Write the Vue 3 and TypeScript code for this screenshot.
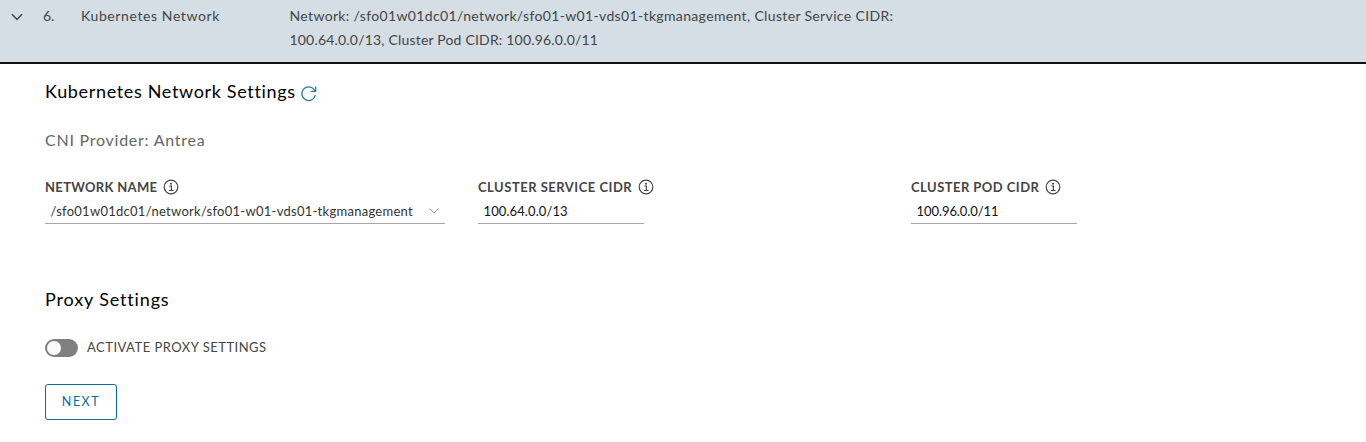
<script setup lang="ts">
import { ref } from 'vue'

const networkName = '/sfo01w01dc01/network/sfo01-w01-vds01-tkgmanagement'
const serviceCidr = ref('100.64.0.0/13')
const podCidr = ref('100.96.0.0/11')
const proxyActive = ref(false)
</script>

<template>
  <main class="page">
    <header class="step-header">
      <svg class="caret" width="12" height="8" viewBox="0 0 12 8"><path d="M1 1.2 6 6.4 11 1.2" /></svg>
      <span class="step-number">6.</span>
      <span class="step-title">Kubernetes Network</span>
      <div class="summary">
        <div><span class="sum-one">Network: {{ networkName }}, Cluster Service CIDR:</span></div>
        <div><span class="sum-two">{{ serviceCidr }}, Cluster Pod CIDR: {{ podCidr }}</span></div>
      </div>
    </header>

    <section class="content">
      <h2 class="heading">
        <span class="heading-text">Kubernetes Network Settings</span>
        <svg class="refresh" width="16" height="17" viewBox="0 0 16 17">
          <path d="M14.3 10.1A6.8 6.8 0 1 1 13.4 5.1L14 6" />
          <path d="M14.6 1.4V6.3H9.8" />
        </svg>
      </h2>
      <p class="provider"><span>CNI Provider: Antrea</span></p>

      <div class="fields">
        <div class="field">
          <label class="label"><span class="label-name">NETWORK NAME</span>
            <svg class="info" width="16" height="16" viewBox="0 0 16 16"><circle cx="8" cy="8" r="6.8" /><path d="M6.3 7H8.4V11.5M5.9 11.5H10.5" /><circle class="dot" cx="8" cy="4.7" r="1" /></svg>
          </label>
          <div class="select">
            <span class="network-value">{{ networkName }}</span>
            <svg class="select-caret" width="10" height="6" viewBox="0 0 10 6"><path d="M.7 .8 5 5 9.3 .8" /></svg>
          </div>
        </div>
        <div class="field">
          <label class="label"><span class="label-service">CLUSTER SERVICE CIDR</span>
            <svg class="info" width="16" height="16" viewBox="0 0 16 16"><circle cx="8" cy="8" r="6.8" /><path d="M6.3 7H8.4V11.5M5.9 11.5H10.5" /><circle class="dot" cx="8" cy="4.7" r="1" /></svg>
          </label>
          <input v-model="serviceCidr" class="input service" type="text">
        </div>
        <div class="field">
          <label class="label"><span class="label-pod">CLUSTER POD CIDR</span>
            <svg class="info" width="16" height="16" viewBox="0 0 16 16"><circle cx="8" cy="8" r="6.8" /><path d="M6.3 7H8.4V11.5M5.9 11.5H10.5" /><circle class="dot" cx="8" cy="4.7" r="1" /></svg>
          </label>
          <input v-model="podCidr" class="input pod" type="text">
        </div>
      </div>

      <h2 class="heading proxy-heading"><span>Proxy Settings</span></h2>
      <div class="toggle-row" role="switch" :aria-checked="proxyActive" @click="proxyActive = !proxyActive">
        <span class="toggle" :class="{ on: proxyActive }"><i class="knob"></i></span>
        <span class="toggle-label">ACTIVATE PROXY SETTINGS</span>
      </div>
      <button class="next" type="button"><span>NEXT</span></button>
    </section>
  </main>
</template>

<style>
body { background: #fff; }
</style>

<style scoped>
.page {
  height: 442px;
  overflow: hidden;
  background: #fff;
  color: #454545;
  font-family: Lato, "Open Sans", sans-serif;
}
svg { display: block; flex: none; fill: none; }
span { white-space: nowrap; }
.step-header {
  box-sizing: border-box;
  height: 64px;
  display: flex;
  align-items: flex-start;
  padding: 4px 0 0 11px;
  background: #d4dee4;
  border-bottom: 2px solid #111;
  font-size: 14px;
  line-height: 24px;
}
.caret { margin-top: 9px; stroke: #454545; stroke-width: 1.5; }
.step-number { width: 38px; margin-left: 20px; }
.step-title { width: 208px; letter-spacing: .6px; }
.summary { padding-left: .5px; }
.sum-one { letter-spacing: .35px; }
.sum-two { letter-spacing: .19px; }
.content { padding: 15px 45px 0; }
.heading {
  display: flex;
  margin: 0;
  height: 24px;
  line-height: 24px;
  font-size: 18px;
  font-weight: 400;
  color: #000;
}
.heading-text { width: 256px; letter-spacing: .66px; }
.refresh { margin-top: 6px; stroke: #1d7dab; stroke-width: 1.3; }
.provider {
  margin: 25px 0 0;
  height: 24px;
  line-height: 24px;
  font-size: 16px;
  letter-spacing: .75px;
  color: #666;
}
.fields {
  display: grid;
  grid-template-columns: 433px 433px 1fr;
  height: 73px;
  margin-top: 26px;
}
.label {
  display: flex;
  gap: 6px;
  height: 18px;
  line-height: 18px;
  font-size: 13px;
  font-weight: 700;
  color: #454545;
}
.info { margin-top: 1px; stroke: #454545; stroke-width: 1.2; }
.info .dot { fill: #454545; stroke: none; }
.label-name { letter-spacing: .32px; }
.label-service { letter-spacing: .5px; }
.label-pod { letter-spacing: .46px; }
.select, .input {
  box-sizing: border-box;
  height: 25px;
  margin: 3px 0 0;
  padding: 0 5.5px;
  border: 0;
  border-bottom: 1px solid #a6a6a6;
  border-radius: 0;
  outline: 0;
  background: transparent;
  font: 400 13px/24px Lato, "Open Sans", sans-serif;
  color: #111;
}
.select {
  display: flex;
  justify-content: space-between;
  width: 400px;
  padding-right: 6px;
  color: #333;
}
.network-value { letter-spacing: .27px; }
.select-caret { margin-top: 9px; stroke: #999; stroke-width: 1; }
.input { display: block; width: 166px; }
.service { letter-spacing: .1px; }
.pod { letter-spacing: -.07px; }
.proxy-heading { margin-top: 36px; letter-spacing: .85px; }
.toggle-row {
  display: flex;
  align-items: center;
  width: max-content;
  height: 18px;
  margin-top: 28px;
}
.toggle {
  box-sizing: border-box;
  width: 33px;
  height: 18px;
  padding: 2px;
  border-radius: 9px;
  background: #808080;
}
.toggle.on { background: #5aa220; padding-left: 17px; }
.knob { display: block; width: 14px; height: 14px; border-radius: 50%; background: #fafafa; }
.toggle-label { margin: 0 0 2px 9px; font-size: 13px; letter-spacing: .49px; }
.next {
  display: block;
  box-sizing: border-box;
  width: 72px;
  height: 36px;
  margin: 27px 0 0;
  padding: 0;
  border: 1px solid #0b6aa0;
  border-radius: 3px;
  background: #fff;
  color: #0b6aa0;
  font: 400 12.5px/34px Lato, "Open Sans", sans-serif;
  letter-spacing: 1.5px;
}
</style>
